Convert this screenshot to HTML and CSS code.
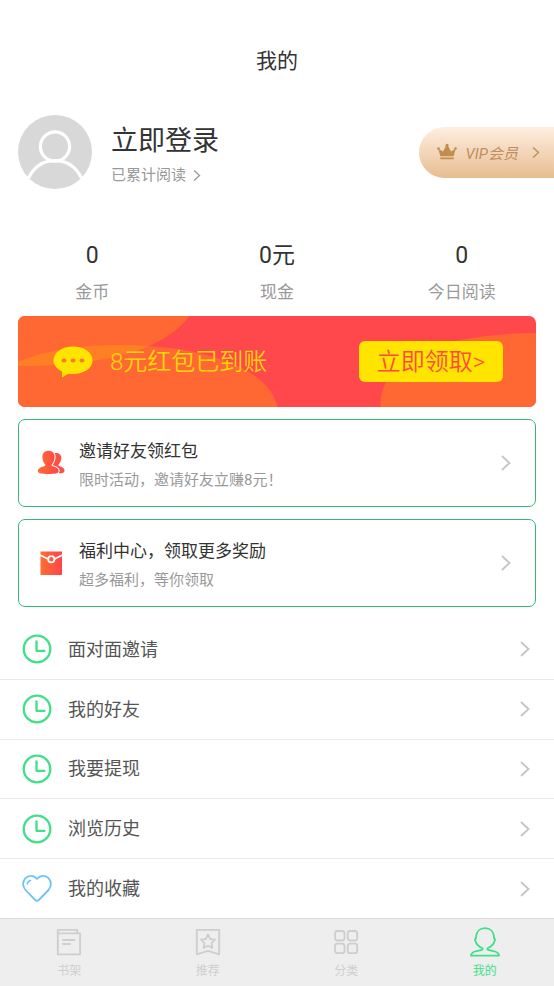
FILE: index.html
```html
<!DOCTYPE html>
<html lang="zh-CN">
<head>
<meta charset="utf-8">
<meta name="viewport" content="width=device-width, initial-scale=1">
<title>我的</title>
<link rel="stylesheet" href="styles.css">
</head>
<body>
<svg class="defs" aria-hidden="true">
  <defs>
    <linearGradient id="warm" x1="0" y1="0" x2="1" y2="0">
      <stop offset="0" stop-color="#ff6d33"/><stop offset="1" stop-color="#ff4549"/>
    </linearGradient>
    <symbol id="chevron" viewBox="0 0 12 18"><path d="M2 2l7.500 7-7.500 7" fill="none" stroke="currentColor" stroke-width="1.800"/></symbol>
    <symbol id="clock" viewBox="0 0 30 30"><g fill="none" stroke="#40df88" stroke-width="2.300"><circle cx="15" cy="15" r="13.300"/><path d="M14.500 7.500v9.300h8" stroke-linejoin="round" stroke-linecap="round"/></g></symbol>
  </defs>
</svg>
<header class="topbar"><h1>我的</h1></header>
<main class="main">
  <section class="profile">
    <svg class="avatar" viewBox="0 0 74 74" aria-hidden="true">
      <circle cx="37" cy="37" r="37" fill="#d8d8d8"/>
      <g fill="none" stroke="#fff" stroke-width="3.200"><circle cx="37" cy="31.500" r="14.600"/><path d="M10.500 63C16 52 25 45.600 37 45.600S58 52 63.500 63"/></g>
    </svg>
    <div class="who">
      <a class="login" href="#login">立即登录</a>
      <a class="read" href="#read">已累计阅读 <svg class="chev-s"><use href="#chevron"/></svg></a>
    </div>
    <a class="vip" href="#vip">
      <svg class="crown" viewBox="0 0 20 18" aria-hidden="true"><path d="M3.300 13.200L1.300 5.800l4.700 2.700L9.200 2.500h1.600L14 8.500l4.700-2.700-2 7.400zM3.300 14.500h13.400v1.800H3.300z" fill="#c48d50"/><circle cx="10" cy="2.200" r="1.500" fill="#c48d50"/><circle cx="1.500" cy="5.600" r="1.300" fill="#c48d50"/><circle cx="18.500" cy="5.600" r="1.300" fill="#c48d50"/></svg>
      <span>VIP会员</span>
      <svg class="chev-s"><use href="#chevron"/></svg>
    </a>
  </section>
  <dl class="stats">
    <div><dd>0</dd><dt>金币</dt></div>
    <div><dd>0元</dd><dt>现金</dt></div>
    <div><dd>0</dd><dt>今日阅读</dt></div>
  </dl>
  <section class="banner">
    <svg class="waves" viewBox="0 0 517 91" preserveAspectRatio="none" aria-hidden="true">
      <defs><clipPath id="hill"><path d="M0 46C25 35 65 28 107 29C180 30 249 49 259 91H0z"/></clipPath></defs>
      <path d="M0 0H171C148 31 95 50 0 50z" fill="#ff6833"/>
      <path d="M0 46C25 35 65 28 107 29C180 30 249 49 259 91H0z" fill="#ff6833"/>
      <path d="M0 0H171C148 31 95 50 0 50z" fill="#ff8024" clip-path="url(#hill)"/>
      <path d="M362 91C359 47 413 18 517 17V91z" fill="#ff6833"/>
    </svg>
    <svg class="bubble" viewBox="0 0 40 32" aria-hidden="true">
      <path d="M20 .5C31 .5 39.500 6.500 39.500 14.500S31 28 20 28q-2.500 0-4.500-.3L9 31.400V25.500C4 23 .5 19.300 .5 14.500 .5 6.500 9 .5 20 .5z" fill="#ffe400"/>
      <g fill="#ff7a2c"><ellipse cx="11" cy="14.500" rx="2.500" ry="2"/><ellipse cx="20" cy="14.500" rx="2.500" ry="2"/><ellipse cx="29" cy="14.500" rx="2.500" ry="2"/></g>
    </svg>
    <span class="arrived">8元红包已到账</span>
    <button class="claim" type="button">立即领取&gt;</button>
  </section>
  <a class="card" href="#invite">
    <svg class="card-icon" viewBox="0 0 28 28" aria-hidden="true">
      <path d="M17 4.300C21.500 3 24.300 5.500 24.300 9C24.300 12 23 14 21.600 15.500V16.500C23 18 27.500 18 27.500 21.500C27.500 23.500 26 24.300 22 24.300L14 15z" fill="#ff5043"/>
      <path d="M11.500 1.800C15.200 1.800 17.600 4.200 17.600 7.500C17.600 11.500 16.200 14 14.700 15.500V16.500C16 18 21.700 18 21.700 22C21.700 24.400 18 25 11.200 25S.8 24.400.8 22C.8 18 7 18 8.300 16.500V15.500C6.800 14 5.400 11.500 5.400 7.500C5.400 4.200 7.800 1.800 11.500 1.800z" fill="url(#warm)" stroke="#fff" stroke-width="2" paint-order="stroke"/>
    </svg>
    <span class="card-text"><strong>邀请好友领红包</strong><small>限时活动，邀请好友立赚8元！</small></span>
    <svg class="chev"><use href="#chevron"/></svg>
  </a>
  <a class="card" href="#welfare">
    <svg class="card-icon" viewBox="0 0 28 28" aria-hidden="true">
      <path d="M3.500 2.500h21.500v23.500H3.500z" fill="url(#warm)"/>
      <path d="M3 6l8 4M25.500 6l-8 4" fill="none" stroke="#fff" stroke-width="1.800"/><circle cx="14.300" cy="10.300" r="3.100" fill="#ff5b3d" stroke="#fff" stroke-width="1.800"/>
    </svg>
    <span class="card-text"><strong>福利中心，领取更多奖励</strong><small>超多福利，等你领取</small></span>
    <svg class="chev"><use href="#chevron"/></svg>
  </a>
  <nav class="menu">
    <a href="#face"><svg class="menu-icon"><use href="#clock"/></svg><span>面对面邀请</span><svg class="chev"><use href="#chevron"/></svg></a>
    <a href="#friends"><svg class="menu-icon"><use href="#clock"/></svg><span>我的好友</span><svg class="chev"><use href="#chevron"/></svg></a>
    <a href="#withdraw"><svg class="menu-icon"><use href="#clock"/></svg><span>我要提现</span><svg class="chev"><use href="#chevron"/></svg></a>
    <a href="#history"><svg class="menu-icon"><use href="#clock"/></svg><span>浏览历史</span><svg class="chev"><use href="#chevron"/></svg></a>
    <a href="#favorites"><svg class="menu-icon" viewBox="0 0 30 30"><g fill="none" stroke="#6ac4fa" stroke-width="1.800" stroke-linejoin="round" stroke-linecap="round"><path d="M15 4.800C11.500.8 6.500 1 3.500 4.200.4 7.600.3 12.600 3.500 16l9.700 10q1.800 1.700 3.600 0l9.700-10c3.200-3.400 3.100-8.400 0-11.800C23.500 1 18.500.8 15 4.800z"/><path d="M5.300 10c.2-1.800 1.500-3.100 3.300-3.500" stroke-width="1.400"/></g></svg><span>我的收藏</span><svg class="chev"><use href="#chevron"/></svg></a>
  </nav>
</main>
<nav class="tabs">
  <a href="#shelf"><svg viewBox="0 0 30 30"><g fill="none" stroke="currentColor" stroke-width="1.800" stroke-linejoin="round"><path d="M3.800 6.300h22.300v21H3.800zM3.800 6.300V2.800h19.400v3.500"/><path d="M9 13h11.500M9 17h7" stroke-linecap="round"/></g></svg><span>书架</span></a>
  <a href="#picks"><svg viewBox="0 0 30 30"><g fill="none" stroke="currentColor" stroke-width="1.800" stroke-linejoin="round"><path d="M3.800 2.800h22.400v24.500L15 23.800 3.800 27.300z"/><path d="M15 7.500l2.100 4.500 4.900.7-3.500 3.400.8 4.900-4.300-2.300-4.300 2.300.8-4.900L8 12.700l4.900-.7z"/></g></svg><span>推荐</span></a>
  <a href="#category"><svg viewBox="0 0 30 30"><g fill="none" stroke="currentColor" stroke-width="1.800"><rect x="4" y="4" width="9.500" height="9.500" rx="2.500"/><rect x="16.700" y="4" width="9.500" height="9.500" rx="2.500"/><rect x="4" y="16.700" width="9.500" height="9.500" rx="2.500"/><rect x="16.700" y="16.700" width="9.500" height="9.500" rx="2.500"/></g></svg><span>分类</span></a>
  <a class="active" href="#me" aria-current="page"><svg viewBox="0 0 30 30"><path d="M15 1.200c5.300 0 8.800 3.600 9 8.800v1.500c.9.200 1.300.9.900 1.700l-.7 1.800c-.8 2.700-2.800 4.500-6.700 6.300v1.200c1.200.8 4.600 1.200 7.300 2 2.600.8 4.200 1.800 4.200 4.200H1c0-2.400 1.600-3.400 4.200-4.200 2.700-.8 6.100-1.200 7.300-2v-1.200c-3.900-1.800-5.900-3.600-6.700-6.300l-.7-1.800c-.4-.8 0-1.500.9-1.700V10c.2-5.200 3.700-8.800 9-8.800z" fill="none" stroke="currentColor" stroke-width="1.800" stroke-linejoin="round"/></svg><span>我的</span></a>
</nav>
</body>
</html>
```
FILE: styles.css
```css
* { box-sizing: border-box; }
body {
  margin: 0;
  min-height: 100vh;
  display: flex;
  flex-direction: column;
  background: #fff;
  color: #333;
  font-family: Roboto, "Noto Sans CJK SC", sans-serif;
}
a { color: inherit; text-decoration: none; }
svg { display: block; flex: none; }
.defs { position: absolute; width: 0; height: 0; }
.topbar { padding: 46px 0 24px; text-align: center; }
h1 { margin: 0; font-size: 21px; line-height: 30px; font-weight: 400; }
.main { flex: 1; display: flex; flex-direction: column; }
.profile { display: flex; align-items: center; padding: 15px 0 0 18px; }
.avatar { width: 74px; height: 74px; }
.who { flex: 1; margin-left: 19px; padding-top: 6px; display: flex; flex-direction: column; align-items: flex-start; }
.login { font-size: 27px; line-height: 40px; }
.read { display: flex; align-items: center; gap: 6px; font-size: 15px; line-height: 28px; color: #999; }
.chev-s { width: 10px; height: 13px; }
.vip {
  display: flex;
  align-items: center;
  height: 51px;
  padding: 0 13px 0 18px;
  border-radius: 26px 0 0 26px;
  background: linear-gradient(#ffeee0, #e7bd91);
  color: #bd8d5b;
  font-size: 15px;
  font-style: italic;
}
.vip span { margin: 0 13px 0 9px; }
.crown { width: 20px; height: 18px; }
.stats { display: grid; grid-template-columns: repeat(3, 1fr); margin: 51px 0 0; text-align: center; }
.stats div { display: flex; flex-direction: column; }
dd { margin: 0; font-size: 23px; line-height: 32px; }
dt { font-size: 17px; line-height: 40px; color: #999; }
.banner {
  position: relative;
  display: flex;
  align-items: center;
  height: 91px;
  margin: 4px 18px 0;
  padding: 0 33px 0 35px;
  border-radius: 7px;
  overflow: hidden;
  background: #ff484b;
}
.waves { position: absolute; inset: 0; width: 100%; height: 100%; }
.bubble { position: relative; width: 40px; height: 32px; }
.arrived { position: relative; flex: 1; margin-left: 17px; font-size: 24px; line-height: 32px; color: #ffd60a; font-weight: 350; }
.claim {
  position: relative;
  width: 144px;
  height: 41px;
  padding: 0;
  border: 0;
  border-radius: 6px;
  background: #ffe400;
  color: #ff4b40;
  font: inherit;
  font-size: 24px;
  line-height: 36px;
  font-weight: 350;
}
.card {
  display: flex;
  align-items: center;
  height: 88px;
  margin: 12px 18px 0;
  padding: 0 23px 0 18px;
  border: 1px solid #32b878;
  border-radius: 7px;
}
.card-icon { width: 28px; height: 28px; }
.card-text { flex: 1; margin-left: 14px; padding-top: 3px; display: flex; flex-direction: column; }
.card-text strong { font-size: 17px; line-height: 30px; font-weight: 400; }
.card-text small { font-size: 15px; line-height: 28px; color: #999; }
.chev { width: 12px; height: 18px; color: #c5c5c9; }
.menu { flex: 1; display: flex; flex-direction: column; margin-top: 13px; }
.menu a { flex: 1; min-height: 59px; display: flex; align-items: center; padding: 0 23px 0 22px; border-bottom: 1px solid #ebebeb; }
.menu a:last-child { border-bottom: 0; }
.menu-icon { width: 30px; height: 30px; }
.menu span { flex: 1; margin-left: 16px; padding-top: 1px; font-size: 18px; line-height: 28px; color: #555; }
.tabs { display: grid; grid-template-columns: repeat(4, 1fr); height: 68px; border-top: 1px solid #dcdcdc; background: #eee; color: #cecece; }
.tabs a { display: flex; flex-direction: column; align-items: center; padding-top: 8px; gap: 5px; font-size: 12px; line-height: 18px; }
.tabs svg { width: 30px; height: 30px; }
.tabs .active { color: #40df88; }
```
